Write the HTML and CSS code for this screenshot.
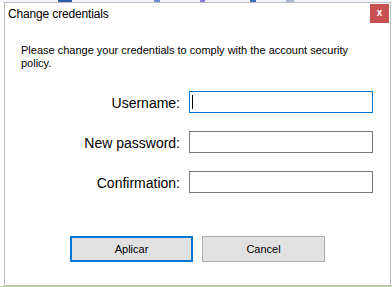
FILE: index.html
```html
<!DOCTYPE html>
<html>
<head>
<meta charset="utf-8">
<link rel="stylesheet" href="styles.css">
</head>
<body>
<div class="desk">
  <div class="topstrip">
    <span class="dot d1"></span><span class="dot d2"></span><span class="dot d3"></span><span class="dot d4"></span><span class="dot d5"></span>
  </div>
  <div class="middle">
    <div class="window">
      <div class="titlebar">
        <span class="title">Change credentials</span>
        <span class="close">x</span>
      </div>
      <div class="client">
        <p class="intro">Please change your credentials to comply with the account security policy.</p>
        <div class="form">
          <label class="label" for="u">Username:</label>
          <div class="field focused"><input id="u" class="input" type="text"><span class="caret"></span></div>
          <label class="label" for="p">New password:</label>
          <div class="field"><input id="p" class="input" type="password"></div>
          <label class="label" for="c">Confirmation:</label>
          <div class="field"><input id="c" class="input" type="password"></div>
        </div>
        <div class="buttons">
          <button class="btn primary">Aplicar</button>
          <button class="btn">Cancel</button>
        </div>
      </div>
    </div>
  </div>
  <div class="bottomstrip"></div>
</div>
</body>
</html>
```

FILE: styles.css
```css
* { box-sizing: border-box; }
html, body { margin: 0; padding: 0; background: #ffffff; }
body { width: 392px; height: 287px; overflow: hidden; font-family: "Liberation Sans", Arial, sans-serif; }

.desk { display: flex; flex-direction: column; width: 392px; height: 287px; }

.topstrip { height: 2px; display: flex; background: #f3f6fa; position: relative; }
.dot { display: block; height: 2px; }
.d1 { width: 14px; margin-left: 58px; background: #2a5ea8; }
.d2 { width: 6px; margin-left: 82px; background: #6d8fd0; }
.d3 { width: 5px; margin-left: 40px; background: #8a7fd4; }
.d4 { width: 6px; margin-left: 45px; background: #3c6fc0; }
.d5 { width: 8px; margin-left: 30px; background: #aab8cf; }

.middle { display: flex; padding-left: 4px; height: 284px; }

.window {
  width: 387px;
  height: 284px;
  border: 1px solid #bcbcbc;
  background: #ffffff;
  display: flex;
  flex-direction: column;
}

.titlebar { height: 31px; display: flex; align-items: flex-start; padding-left: 3px; }
.title { font-size: 12px; line-height: 20px; padding-top: 1px; color: #000; letter-spacing: -0.15px; }
.close {
  margin-left: auto;
  margin-right: 1px;
  margin-top: 1px;
  width: 19px;
  height: 19px;
  background: #c75050;
  color: #fff;
  font-size: 10px;
  font-weight: bold;
  line-height: 17px;
  text-align: center;
}

.client { display: flex; flex-direction: column; }

.intro {
  margin: 10px 0 0 0;
  padding-left: 16px;
  width: 360px;
  font-size: 11px;
  line-height: 13px;
  color: #000;
}

.form {
  margin-top: 21px;
  display: grid;
  grid-template-columns: 175px 184px;
  column-gap: 9px;
  row-gap: 17px;
}
.label {
  font-size: 14px;
  line-height: 22px;
  text-align: right;
  color: #000;
  padding-top: 1px;
}
.field { position: relative; height: 22px; }
.input {
  display: block;
  width: 184px;
  height: 22px;
  margin: 0;
  border: 1px solid #7a7a7a;
  background: #fff;
  padding: 0 3px;
  outline: none;
  font-family: "Liberation Sans", Arial, sans-serif;
  font-size: 13px;
}
.focused .input { border-color: #0078d7; }
.caret {
  position: absolute;
  left: 3px;
  top: 4px;
  width: 1px;
  height: 14px;
  background: #000;
}

.buttons {
  margin-top: 42px;
  display: flex;
  justify-content: center;
  gap: 9px;
}
.btn {
  width: 123px;
  height: 26px;
  margin: 0;
  padding: 0;
  background: #e1e1e1;
  border: 1px solid #adadad;
  font-family: "Liberation Sans", Arial, sans-serif;
  font-size: 11px;
  color: #000;
}
.btn.primary { border: 2px solid #0078d7; }

.bottomstrip { height: 1px; background: #b9d08e; }
```
